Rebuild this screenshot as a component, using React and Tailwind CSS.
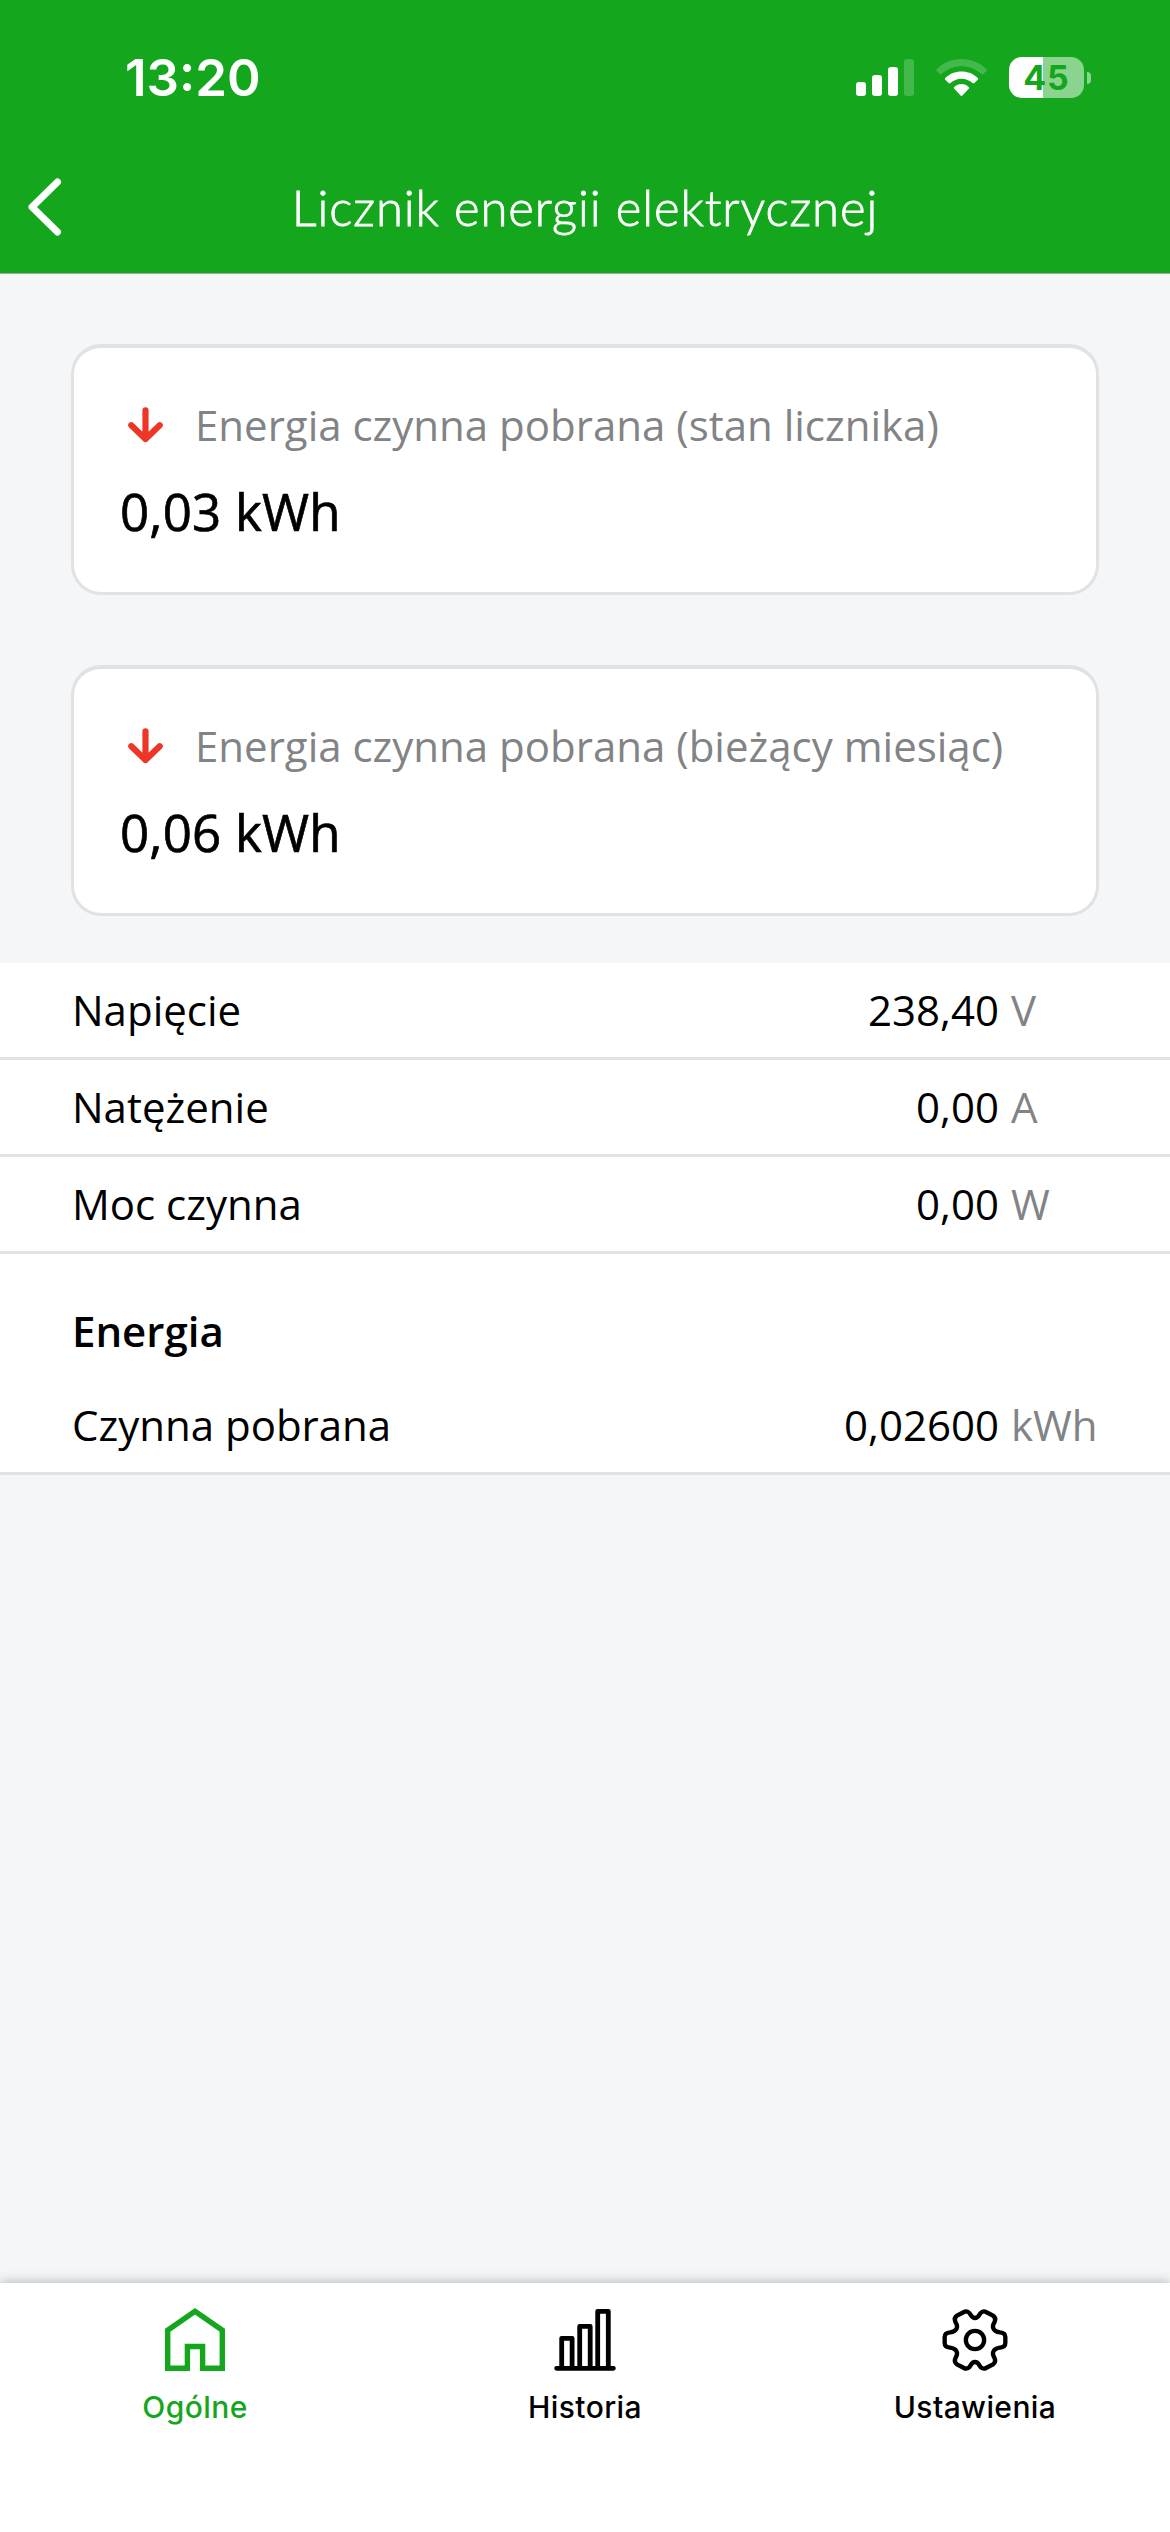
import React from "react";

const cards = [
  { label: "Energia czynna pobrana (stan licznika)", value: "0,03 kWh" },
  { label: "Energia czynna pobrana (bieżący miesiąc)", value: "0,06 kWh" },
];

const readings = [
  { label: "Napięcie", value: "238,40", unit: "V" },
  { label: "Natężenie", value: "0,00", unit: "A" },
  { label: "Moc czynna", value: "0,00", unit: "W" },
];

function SignalIcon() {
  return (
    <svg width="58" height="37" viewBox="0 0 58 37" fill="#fff">
      <rect x="0" y="23" width="10" height="14" rx="3" />
      <rect x="16" y="16" width="10" height="21" rx="3" />
      <rect x="32" y="8" width="10" height="29" rx="3" />
      <rect x="48" y="0" width="10" height="37" rx="3" opacity="0.2" />
    </svg>
  );
}

function WifiIcon() {
  return (
    <svg width="51" height="37" viewBox="0 0 51 37" fill="#fff">
      <path
        opacity="0.2"
        d="M.6 10.2C7 3.700 16 0 25.500 0S44 3.700 50.400 10.200c.6.600.6 1.300 0 1.900l-3 3c-.6.600-1.300.6-1.900 0C40.200 10 33 7.200 25.500 7.200S10.800 10 5.500 15.100c-.6.600-1.300.6-1.900 0l-3-3c-.6-.6-.6-1.300 0-1.900z"
      />
      <path d="M9.300 18.900c4.200-4.200 10-6.400 16.200-6.400s12 2.200 16.200 6.400c.6.600.6 1.300 0 1.900l-3.300 3.300c-.6.600-1.200.6-1.800 0-3-2.800-6.900-4.400-11.100-4.400s-8.100 1.600-11.100 4.400c-.6.600-1.200.6-1.800 0l-3.300-3.300c-.6-.6-.6-1.300 0-1.900z" />
      <path d="M18.300 28c1.900-1.900 4.400-2.900 7.200-2.900s5.300 1 7.200 2.900c.6.600.6 1.200 0 1.800l-6.300 6.700c-.5.600-1.300.6-1.800 0l-6.300-6.700c-.6-.6-.6-1.200 0-1.800z" />
    </svg>
  );
}

function Battery() {
  return (
    <div className="flex items-center gap-[3px]">
      <div className="flex h-[41px] w-[75px] items-center justify-center overflow-hidden rounded-[13px] bg-[linear-gradient(90deg,#fff_34px,#8bd490_34px)] font-['Inter'] text-[34px] leading-[41px] font-bold tracking-[1px] text-[#14a71e]">
        45
      </div>
      <div className="h-3 w-1 rounded-r-full bg-[#8bd490]" />
    </div>
  );
}

function DownArrow() {
  return (
    <svg width="35" height="36" viewBox="0 0 35 36" fill="none" stroke="#ee3626" strokeWidth="6.200" strokeLinecap="round" strokeLinejoin="round">
      <path d="M17.500 3.400V32M3.300 18.200L17.500 32l14.200-13.800" />
    </svg>
  );
}

function HouseIcon() {
  return (
    <svg width="66" height="66" viewBox="0 0 66 66" fill="none" stroke="#14a71e" strokeWidth="5.400">
      <path d="M5.700 62.300V24.200L33 5.300l27.300 18.900v38.100H40.600V40.500H25.400v21.800z" />
    </svg>
  );
}

function ChartIcon() {
  return (
    <svg width="66" height="66" viewBox="0 0 66 66" fill="none" stroke="#000" strokeWidth="4.800" strokeLinecap="round" strokeLinejoin="round">
      <path d="M4.600 62.300h56.800M9.700 62.300v-30h10.400v30M27.700 62.300V20.400h10.500v41.900M45.700 62.300v-57h10.600v57" />
    </svg>
  );
}

function GearIcon() {
  const quarter =
    "M0-66C8-66 11-72 14-77C18-85 26-88 33-84L54-73C60-69 62-62 59-55C56-47 51-43 55-35C59-25 67-24 75-23C85-22 91-17 91-9V0";
  return (
    <svg width="66" height="66" viewBox="-99 -102 198 198" fill="none" stroke="#000" strokeWidth="13">
      <path d={quarter} />
      <path d={quarter} transform="scale(-1 1)" />
      <path d={quarter} transform="scale(1 -1)" />
      <path d={quarter} transform="scale(-1 -1)" />
      <circle r="27.500" />
    </svg>
  );
}

function Reading({ label, value, unit }) {
  return (
    <div className="flex h-[97px] items-center border-b-[3px] border-[#e1e2e4] pr-[72px] pl-[72px]">
      <span className="flex-1">{label}</span>
      <span>{value}</span>
      <span className="ml-[12px] w-[87px] whitespace-nowrap text-[#828385]">{unit}</span>
    </div>
  );
}

function Tab({ icon, label, active }) {
  return (
    <div className={active ? "flex flex-1 flex-col items-center text-[#14a71e]" : "flex flex-1 flex-col items-center text-black"}>
      {icon}
      <span className="mt-[15px] font-['Inter'] text-[30px] leading-[40px] font-medium tracking-[0.4px]">{label}</span>
    </div>
  );
}

export default function App() {
  return (
    <div className="flex h-[2532px] w-[1170px] flex-col overflow-hidden bg-[#f4f6f8] font-['Open_Sans',sans-serif] text-[42px] leading-[58px] text-black">
      <header className="h-[274px] shrink-0 border-b border-[#8fb498] bg-[#14a71e] text-white">
        <div className="flex h-[155px] items-center pr-[79px] pl-[125px]">
          <span className="flex-1 font-['Inter'] text-[51px] leading-[60px] font-semibold">13:20</span>
          <div className="flex items-center gap-[22px]">
            <SignalIcon />
            <WifiIcon />
            <Battery />
          </div>
        </div>
        <div className="flex h-[104px] items-center px-[28px]">
          <svg width="34" height="58" viewBox="0 0 34 58" fill="none" stroke="#fff" strokeWidth="7" strokeLinecap="round" strokeLinejoin="round">
            <path d="M29.500 4L4 29l25.500 25" />
          </svg>
          <h1 className="flex-1 pr-[34px] text-center font-['Lato'] text-[49px] leading-[60px] font-light tracking-[0.9px] [-webkit-text-stroke:0.8px_white]">
            Licznik energii elektrycznej
          </h1>
        </div>
      </header>

      <main className="flex-1">
        <div className="flex flex-col gap-[70px] px-[71px] pt-[70px] pb-[47px]">
          {cards.map((c) => (
            <section key={c.label} className="h-[251px] rounded-[30px] border-[3px] border-t-[4px] border-[#e1e2e4] bg-white pt-[48px] pl-[46px]">
              <div className="flex items-center pl-[8px]">
                <DownArrow />
                <span className="ml-[32px] whitespace-nowrap text-[#828385]">{c.label}</span>
              </div>
              <div className="mt-[22px] text-[51px] leading-[70px] font-medium tracking-[0.2px] [-webkit-text-stroke:0.7px_black]">{c.value}</div>
            </section>
          ))}
        </div>
        <div className="bg-white">
          {readings.map((r) => (
            <Reading key={r.label} {...r} />
          ))}
          <h2 className="pt-[48px] pb-[18px] pl-[72px] font-semibold">Energia</h2>
          <Reading label="Czynna pobrana" value="0,02600" unit="kWh" />
        </div>
      </main>

      <nav className="flex h-[249px] shrink-0 bg-white pt-[23px] shadow-[0_0_12px_rgba(0,0,0,0.3)]">
        <Tab icon={<HouseIcon />} label="Ogólne" active />
        <Tab icon={<ChartIcon />} label="Historia" />
        <Tab icon={<GearIcon />} label="Ustawienia" />
      </nav>
    </div>
  );
}
